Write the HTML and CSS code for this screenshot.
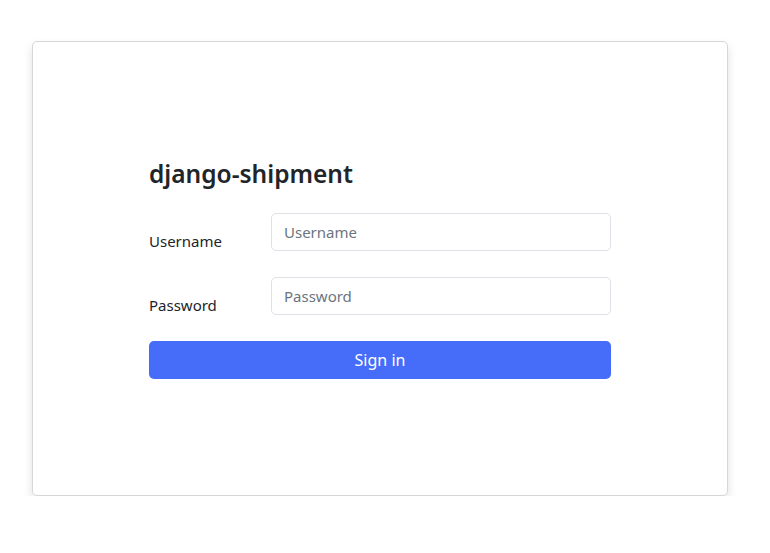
FILE: index.html
```html
<!DOCTYPE html>
<html lang="en">
<head>
<meta charset="utf-8">
<title>django-shipment</title>
<link rel="stylesheet" href="styles.css">
</head>
<body>
<div class="page">
  <div class="card">
    <form class="login">
      <h1 class="title">django-shipment</h1>
      <div class="row">
        <label class="label" for="u">Username</label>
        <input class="input" id="u" type="text" placeholder="Username">
      </div>
      <div class="row">
        <label class="label" for="p">Password</label>
        <input class="input" id="p" type="password" placeholder="Password">
      </div>
      <button class="btn" type="button">Sign in</button>
    </form>
  </div>
</div>
</body>
</html>
```

FILE: styles.css
```css
* { box-sizing: border-box; }
html, body { margin: 0; background: #fff; }
body {
  font-family: "Noto Sans", "Open Sans", sans-serif;
  color: #212529;
}
.page {
  padding: 41px 42px 0 32px;
}
.card {
  width: 696px;
  height: 455px;
  border: 1px solid #d6d6d6;
  border-radius: 5px;
  box-shadow: 0 5px 10px rgba(0,0,0,0.12);
  display: flex;
  align-items: center;
  padding-left: 116px;
}
.login {
  width: 462px;
}
.title {
  font-size: 24.5px;
  font-weight: 600;
  margin: 0 0 23px 0;
  line-height: 32px;
  color: #212529;
}
.row {
  display: flex;
  margin-bottom: 26px;
}
.label {
  width: 122px;
  font-size: 15px;
  padding-top: 19px;
  line-height: 19px;
}
.input {
  width: 340px;
  height: 38px;
  border: 1px solid #dee2e6;
  border-radius: 5px;
  padding: 0 12px;
  font-family: inherit;
  font-size: 15px;
  color: #212529;
}
.input::placeholder { color: #6c757d; }
.btn {
  display: block;
  width: 462px;
  height: 38px;
  border: none;
  border-radius: 5px;
  background: #466cfa;
  color: #fff;
  font-family: inherit;
  font-size: 16px;
}
```
